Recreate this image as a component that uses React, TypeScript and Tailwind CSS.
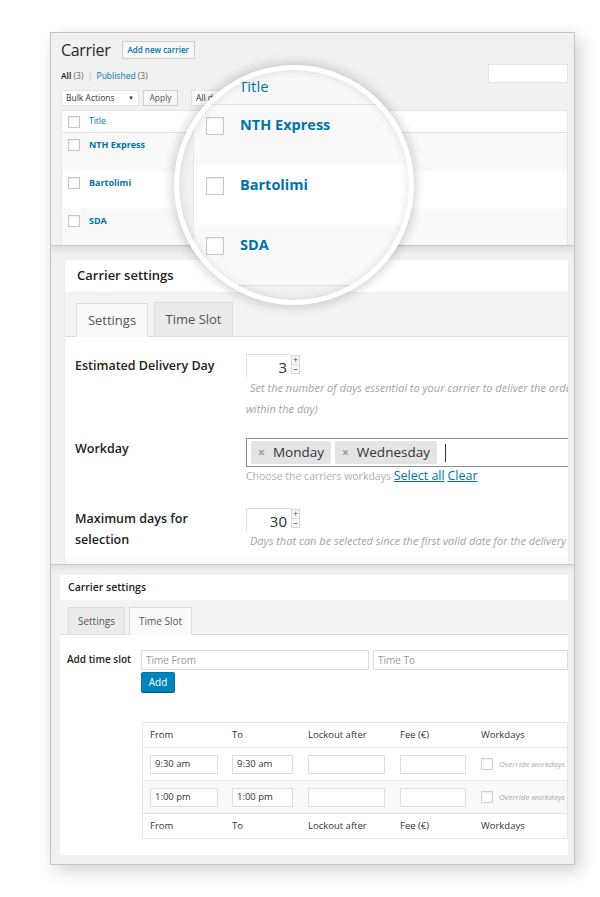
import React from 'react';

const sans = "font-['Open_Sans',Arial,sans-serif]";

function Box({ className = '' }: { className?: string }) {
  return (
    <span
      className={`block shrink-0 border border-[#c6c6c6] bg-white shadow-[inset_0_1px_2px_rgba(0,0,0,0.08)] ${className}`}
    />
  );
}

function NumberField({ value }: { value: string }) {
  return (
    <div className="flex h-[23px]">
      <div className="w-[45px] border-t border-l border-[#dcdcdc] bg-white pr-[4px] text-right text-[15px] leading-[25px] text-[#333]">
        {value}
      </div>
      <div className="mt-[1px] flex h-[19px] w-[9px] flex-col border border-[#d8d8d8] bg-[#f6f6f6] text-center text-[9px] leading-[8px] text-[#555]">
        <span className="h-[9px] border-b border-[#dedede]">+</span>
        <span className="h-[9px]">–</span>
      </div>
    </div>
  );
}

function Chip({ label }: { label: string }) {
  return (
    <span className="flex h-[23px] items-center gap-[8px] rounded-[2px] bg-[#e4e4e4] pl-[7px] pr-[7px] text-[13.5px] text-[#333]">
      <span className="text-[12px] font-bold text-[#999]">×</span>
      {label}
    </span>
  );
}

const carriers = ['NTH Express', 'Bartolimi', 'SDA'];

function CarrierList() {
  return (
    <section className="h-[212px] overflow-hidden bg-[#f1f1f1] pl-[10px] pr-[6px] pt-[7px]">
      <div className="flex h-[20px] items-center">
        <h1 className="text-[16px] leading-[20px] tracking-[-0.3px] text-[#23282d]">Carrier</h1>
        <span className="ml-[11px] h-[18px] border border-[#cfcfcf] bg-[#f7f7f7] px-[5px] text-[8px] font-semibold leading-[16px] text-[#0073aa]">
          Add new carrier
        </span>
      </div>
      <div className="mt-[4px] flex h-[19px] items-end justify-between">
        <div className="pb-[1px] text-[8.5px] leading-[12px] text-[#666]">
          <span className="font-semibold text-[#111]">All</span> (3) <span className="mx-[2px] text-[#bbb]">|</span>{' '}
          <span className="text-[#0073aa]">Published</span> (3)
        </div>
        <div className="h-[19px] w-[80px] border border-[#e3e3e3] bg-white" />
      </div>
      <div className="mt-[7px] flex h-[16px] items-stretch text-[8.5px] text-[#333]">
        <div className="flex w-[78px] items-center justify-between border border-[#e3e3e3] bg-white px-[4px]">
          <span>Bulk Actions</span>
          <span className="text-[6px]">▼</span>
        </div>
        <div className="ml-[4px] flex w-[35px] items-center justify-center border border-[#cfcfcf] bg-[#f7f7f7] text-[#555]">
          Apply
        </div>
        <div className="ml-[13px] flex w-[70px] items-center border border-[#e3e3e3] bg-white px-[4px]">All dates</div>
      </div>
      <div className="mt-[4px] border border-[#e5e5e5] bg-white">
        <div className="flex h-[22px] items-center border-b border-[#e1e1e1] pl-[6px]">
          <Box className="h-[12px] w-[12px]" />
          <span className="ml-[9px] text-[8.5px] text-[#0073aa]">Title</span>
        </div>
        {carriers.map((name, i) => (
          <div
            key={name}
            className={`flex h-[38px] items-start pl-[6px] pt-[6px] ${i % 2 === 0 ? 'bg-[#f9f9f9]' : 'bg-white'}`}
          >
            <Box className="h-[12px] w-[12px]" />
            <span className="ml-[9px] text-[9px] font-bold leading-[12px] text-[#0073aa]">{name}</span>
          </div>
        ))}
      </div>
    </section>
  );
}

function Magnifier() {
  return (
    <div className="absolute left-[123px] top-[32px] h-[240px] w-[240px] overflow-hidden rounded-full border-[5px] border-white bg-[#f1f1f1] shadow-[0_0_10px_3px_rgba(0,0,0,0.16)]">
      <div className="absolute left-[14px] top-[-3px] w-[260px] border-l border-[#e6e6e6] bg-white">
        <div className="flex h-[38px] items-center border-b border-[#e2e2e2] bg-[#f7f7f7] pl-[45px] pt-[2px]">
          <span className="text-[15px] text-[#0073aa]">Title</span>
        </div>
        {carriers.map((name, i) => (
          <div
            key={name}
            className={`flex h-[60px] items-start pl-[12px] pt-[12px] ${i % 2 === 0 ? 'bg-[#f9f9f9]' : 'bg-white'}`}
          >
            <Box className="h-[18px] w-[18px]" />
            <span className="ml-[16px] mt-[-2px] text-[14.5px] font-bold leading-[20px] text-[#0073aa]">{name}</span>
          </div>
        ))}
        <div className="h-[40px] border-t border-[#dedede] bg-[#f1f1f1]" />
      </div>
      <div className="pointer-events-none absolute inset-0 rounded-full shadow-[inset_0_0_8px_rgba(0,0,0,0.12)]" />
    </div>
  );
}

function SettingsTab() {
  return (
    <section className="h-[319px] overflow-hidden border-t border-[#c9c9c9] bg-[#f1f1f1] pl-[14px] pr-[6px] pt-[14px] shadow-[inset_0_10px_10px_-8px_rgba(0,0,0,0.12)]">
      <div className="h-full overflow-hidden bg-white shadow-[0_1px_2px_rgba(0,0,0,0.05)]">
        <div className="flex h-[33px] items-center border-b border-[#eeeeee] pl-[12px] text-[13px] font-semibold text-[#222]">
          Carrier settings
        </div>
        <div className="flex h-[44px] items-end gap-[6px] border-b border-[#dddddd] bg-[#f3f3f3] pl-[11px]">
          <div className="-mb-px flex h-[34px] w-[72px] items-center justify-center border border-b-0 border-[#dcdcdc] bg-[#f9f9f9] text-[13px] text-[#555]">
            Settings
          </div>
          <div className="flex h-[34px] w-[79px] items-center justify-center border border-b-0 border-[#dcdcdc] bg-[#ebebeb] text-[13px] text-[#555]">
            Time Slot
          </div>
        </div>
        <div className="relative h-[240px] pl-[10px] pt-[17px] text-[#222]">
          <div className="flex">
            <div className="w-[171px] shrink-0 whitespace-nowrap pt-[1px] text-[12.5px] font-semibold leading-[21px]">
              Estimated Delivery Day
            </div>
            <div className="min-w-0">
              <NumberField value="3" />
              <p className="whitespace-nowrap pl-[4px] text-[11px] italic leading-[21px] text-[#a3a3a3]">
                Set the number of days essential to your carrier to deliver the order (0 means delivered
              </p>
              <p className="text-[11px] italic leading-[21px] text-[#a3a3a3]">within the day)</p>
            </div>
          </div>
          <div className="mt-[19px] flex">
            <div className="w-[171px] shrink-0 text-[12.5px] font-semibold leading-[21px]">Workday</div>
            <div className="min-w-0">
              <div className="flex h-[29px] w-[400px] items-center gap-[4px] border-[1.5px] border-[#8d8d8d] pl-[4px]">
                <Chip label="Monday" />
                <Chip label="Wednesday" />
                <span className="ml-[4px] h-[18px] w-px bg-[#333]" />
              </div>
              <p className="whitespace-nowrap text-[10.5px] leading-[18px] text-[#b0b0b0]">
                Choose the carriers workdays{' '}
                <span className="text-[12.5px] text-[#0073aa] underline">Select all</span>{' '}
                <span className="text-[12.5px] text-[#0073aa] underline">Clear</span>
              </p>
            </div>
          </div>
          <div className="mt-[23px] flex">
            <div className="w-[171px] shrink-0 text-[12.5px] font-semibold leading-[21px]">
              Maximum days for
              <br />
              selection
            </div>
            <div className="min-w-0">
              <NumberField value="30" />
              <p className="whitespace-nowrap pl-[4px] text-[11px] italic leading-[19px] text-[#a3a3a3]">
                Days that can be selected since the first valid date for the delivery
              </p>
            </div>
          </div>
          <div className="pointer-events-none absolute inset-x-0 bottom-0 h-[22px] bg-gradient-to-b from-white to-[#ececec]" />
        </div>
      </div>
    </section>
  );
}

const slots = [
  { from: '9:30 am', to: '9:30 am' },
  { from: '1:00 pm', to: '1:00 pm' },
];

function SlotHead() {
  return (
    <div className="grid h-[24px] grid-cols-[82px_76px_92px_81px_1fr] items-center pl-[7px] text-[9.5px] text-[#333]">
      <span>From</span>
      <span>To</span>
      <span>Lockout after</span>
      <span>Fee (€)</span>
      <span>Workdays</span>
    </div>
  );
}

function TimeSlotTab() {
  return (
    <section className="h-[300px] overflow-hidden border-t border-[#c9c9c9] bg-[#f1f1f1] pl-[9px] pr-[6px] pt-[10px] shadow-[inset_0_8px_8px_-7px_rgba(0,0,0,0.12)]">
      <div className="overflow-hidden bg-white">
        <div className="flex h-[25px] items-center pl-[8px] text-[10.5px] font-semibold text-[#222]">Carrier settings</div>
        <div className="flex h-[35px] items-end gap-[4px] border-b border-[#dddddd] bg-[#f3f3f3] pl-[8px]">
          <div className="flex h-[27px] w-[57px] items-center justify-center border border-b-0 border-[#dcdcdc] bg-[#ebebeb] text-[10px] text-[#555]">
            Settings
          </div>
          <div className="-mb-px flex h-[28px] w-[63px] items-center justify-center border border-b-0 border-[#dcdcdc] bg-[#f9f9f9] text-[10px] text-[#555]">
            Time Slot
          </div>
        </div>
        <div className="h-[220px] pt-[15px]">
          <div className="flex">
            <div className="w-[81px] shrink-0 pl-[7px] pt-[2px] text-[10px] font-semibold leading-[14px] text-[#222]">
              Add time slot
            </div>
            <div className="min-w-0 flex-1">
              <div className="flex gap-[4px]">
                <div className="flex h-[20px] w-[228px] items-center border border-[#dddddd] pl-[4px] text-[10px] text-[#999]">
                  Time From
                </div>
                <div className="flex h-[20px] flex-1 items-center border border-[#dddddd] pl-[4px] text-[10px] text-[#999]">
                  Time To
                </div>
              </div>
              <div className="mt-[2px] flex h-[20px] w-[34px] items-center justify-center rounded-[2px] border border-[#0073aa] bg-[#0085ba] text-[10px] text-white shadow-[0_1px_0_#006799]">
                Add
              </div>
            </div>
          </div>
          <div className="ml-[82px] mt-[30px] border border-[#e5e5e5]">
            <SlotHead />
            {slots.map((s, i) => (
              <div
                key={i}
                className={`grid h-[33px] grid-cols-[82px_76px_92px_81px_1fr] items-center border-t border-[#ececec] pl-[7px] text-[9.5px] text-[#333] ${i === 1 ? 'bg-[#f9f9f9]' : 'bg-white'}`}
              >
                <div className="flex h-[19px] w-[68px] items-center border border-[#dddddd] bg-white pl-[4px]">{s.from}</div>
                <div className="flex h-[19px] w-[61px] items-center border border-[#dddddd] bg-white pl-[4px]">{s.to}</div>
                <div className="h-[19px] w-[77px] border border-[#dddddd] bg-white" />
                <div className="h-[19px] w-[66px] border border-[#dddddd] bg-white" />
                <div className="flex items-center gap-[6px] whitespace-nowrap">
                  <Box className="h-[12px] w-[12px] border-[#d0d0d0]" />
                  <span className="text-[8px] italic text-[#aaa]">Override workdays</span>
                </div>
              </div>
            ))}
            <div className="border-t border-[#e5e5e5]">
              <SlotHead />
            </div>
          </div>
        </div>
      </div>
    </section>
  );
}

export default function App() {
  return (
    <div className={`h-[897px] w-[600px] bg-white pl-[50px] pt-[32px] ${sans}`}>
      <div className="relative w-[525px] border border-[#c4c4c4] shadow-[5px_6px_16px_rgba(0,0,0,0.18)]">
        <CarrierList />
        <SettingsTab />
        <TimeSlotTab />
        <Magnifier />
      </div>
    </div>
  );
}
